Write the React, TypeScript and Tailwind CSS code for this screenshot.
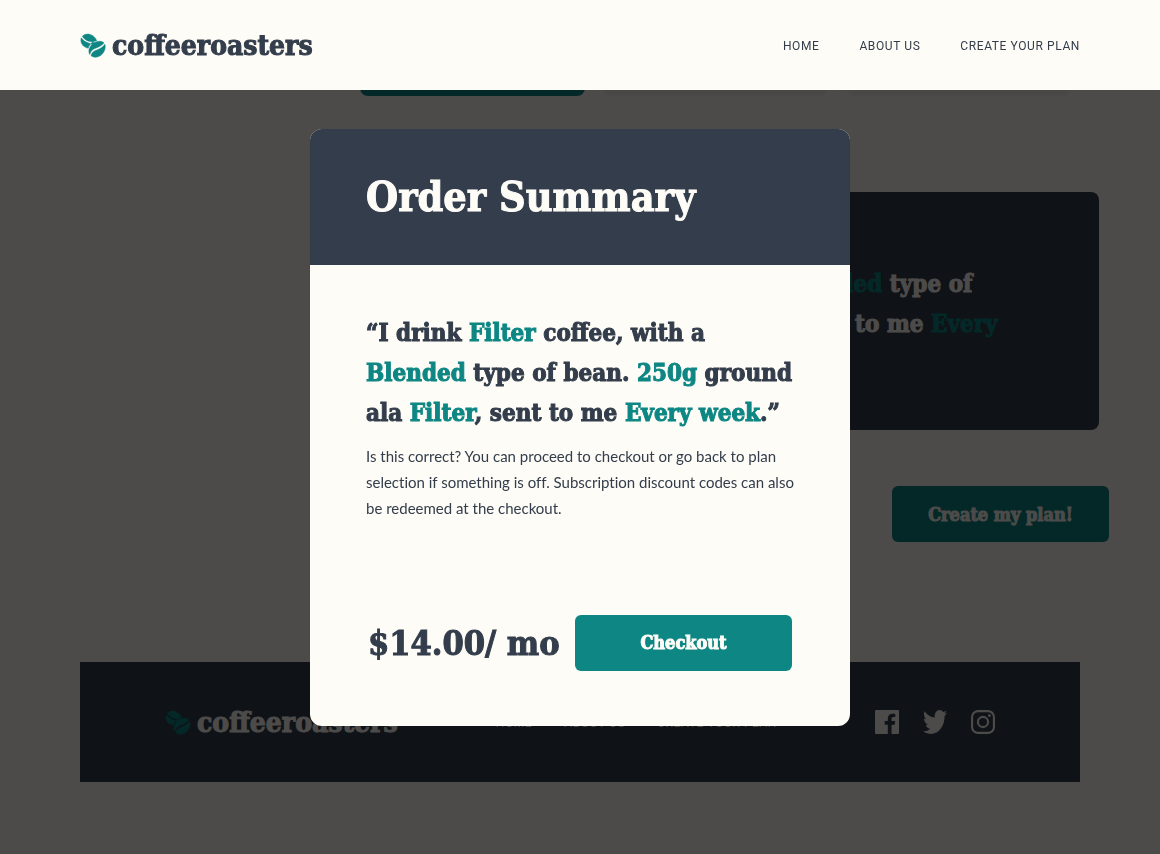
import type { ReactNode } from 'react';

const links = ['Home', 'About us', 'Create your plan'];

const display = "font-['DejaVu_Serif_Condensed','DejaVu_Serif',serif] font-bold";
const heavy = `${display} [-webkit-text-stroke:1px_currentColor]`;

function Beans() {
  return (
    <svg viewBox="0 0 26 26" className="h-[26px] w-[26px] shrink-0" aria-hidden="true">
      <g className="fill-[#0e8784] stroke-[#0e8784]" strokeWidth="0.5">
        <path d="M2.3 3.4C5 6.9 7.4 8 10.6 8.6C12.4 8.9 13.6 9.3 14.4 9.9L12.2 11.4C11 10.7 9.8 10.4 8.4 9.9C5.4 8.9 3.2 7.4 1.3 4.8C.2 8 1.4 11.5 4.3 13.6C5.5 14.5 6.9 15 8.2 15.2C8.8 13 10.2 11 12.2 9.6C13.6 8.6 15.1 8 16.6 7.8C15.9 4.8 13.3 2.3 10 1.4C7 .6 4 1.4 2.3 3.4Z" />
        <path d="M24 9.8C22.2 8.2 19.3 7.8 16.4 8.8C11.8 10.4 8.6 14.6 8.9 18.7C9 19.8 9.3 20.7 9.8 21.5C10.4 17.9 12.6 16.4 16 15C19.6 13.6 22.1 12.3 24 9.8Z" />
        <path d="M24.9 11.3C23.2 14.1 20.6 15.4 17.4 16.7C13.8 18.1 11.8 19.3 11 22.8C13 24.4 15.9 24.7 18.7 23.5C23.4 21.5 26.2 15.9 24.9 11.3Z" />
      </g>
    </svg>
  );
}

function Logo() {
  return (
    <a href="#home" className="flex items-center gap-1.5 pt-0.5">
      <Beans />
      <span className={`${heavy} text-[28px] leading-8`}>coffeeroasters</span>
    </a>
  );
}

function Nav({ label, className }: { label: string; className: string }) {
  return (
    <nav aria-label={label} className="pt-0.5">
      <ul className={`flex text-xs uppercase leading-4 tracking-wider ${className}`}>
        {links.map((link) => (
          <li key={link}>
            <a href={`#${link.toLowerCase().replaceAll(' ', '-')}`}>{link}</a>
          </li>
        ))}
      </ul>
    </nav>
  );
}

function Pick({ children }: { children: ReactNode }) {
  return <span className="text-[#0e8784]">{children}</span>;
}

function Choice() {
  return (
    <>
      “I drink <Pick>Filter</Pick> coffee, with a <Pick>Blended</Pick> type of bean. <Pick>250g</Pick> ground ala{' '}
      <Pick>Filter</Pick>, sent to me <Pick>Every week</Pick>.”
    </>
  );
}

function Socials() {
  return (
    <div className="flex items-center gap-6">
      <a href="#facebook" aria-label="Facebook">
        <svg viewBox="0 0 24 24" className="size-6 fill-current">
          <path d="M22.675 0H1.325C.593 0 0 .593 0 1.325v21.351C0 23.407.593 24 1.325 24H12.82v-9.294H9.692v-3.622h3.128V8.413c0-3.1 1.893-4.788 4.659-4.788 1.325 0 2.463.099 2.795.143v3.24l-1.918.001c-1.504 0-1.795.715-1.795 1.763v2.313h3.587l-.467 3.622h-3.12V24h6.116c.73 0 1.323-.593 1.323-1.325V1.325C24 .593 23.407 0 22.675 0z" />
        </svg>
      </a>
      <a href="#twitter" aria-label="Twitter">
        <svg viewBox="0 2.2 24 19.6" preserveAspectRatio="none" className="size-6 fill-current">
          <path d="M24 4.557a9.83 9.83 0 01-2.828.775 4.932 4.932 0 002.165-2.724 9.864 9.864 0 01-3.127 1.195 4.916 4.916 0 00-3.594-1.555c-3.179 0-5.515 2.966-4.797 6.045A13.978 13.978 0 011.671 3.149a4.93 4.93 0 001.523 6.574 4.903 4.903 0 01-2.229-.616c-.054 2.281 1.581 4.415 3.949 4.89a4.935 4.935 0 01-2.224.084 4.928 4.928 0 004.6 3.419A9.9 9.9 0 010 19.54a13.94 13.94 0 007.548 2.212c9.142 0 14.307-7.721 13.995-14.646A10.025 10.025 0 0024 4.557z" />
        </svg>
      </a>
      <a href="#instagram" aria-label="Instagram">
        <svg viewBox="0 0 24 24" className="size-6 fill-none stroke-current" strokeWidth="2.16">
          <rect x="1.08" y="1.08" width="21.84" height="21.84" rx="6" />
          <circle cx="12" cy="12" r="5.08" />
          <circle cx="18.41" cy="5.6" r="1.44" className="fill-current stroke-none" />
        </svg>
      </a>
    </div>
  );
}

export default function App() {
  return (
    <div className="min-h-screen bg-[#fefcf7] font-[Roboto,sans-serif] text-[#333d4b]">
      <header className="fixed inset-x-0 top-0 z-30 flex h-[90px] items-center justify-between bg-[#fefcf7] px-20">
        <Logo />
        <Nav label="Main" className="gap-10" />
      </header>

      <main className="pb-[120px] pl-[360px] pr-[51px]">
        <div className="mr-[38px] grid grid-cols-3 gap-[18px]">
          <div className="h-24 rounded-lg bg-[#0e8784]" />
          <div className="h-24 rounded-lg bg-[#f4f1eb]" />
          <div className="h-24 rounded-lg bg-[#f4f1eb]" />
        </div>
        <section className="mr-[10px] mt-24 flex min-h-[238px] flex-col justify-center rounded-lg bg-[#333d4b] pl-[76px] pr-16 text-[#fefcf7]">
          <h2 className="text-base uppercase leading-[26px]">Order Summary</h2>
          <p className={`${heavy} text-2xl leading-10`}>
            <Choice />
          </p>
        </section>
        <div className="mt-14 flex justify-end">
          <button type="button" className={`${heavy} h-14 w-[217px] rounded-md bg-[#0e8784] pt-0.5 text-lg text-[#fefcf7]`}>
            Create my plan!
          </button>
        </div>
      </main>

      <footer className="mx-20 mb-[72px] flex h-[120px] items-center justify-between bg-[#333d4b] px-[85px] text-[#fefcf7]">
        <Logo />
        <Nav label="Footer" className="gap-8" />
        <Socials />
      </footer>

      <div className="fixed inset-0 z-20 flex items-center justify-center bg-black/70">
        <div
          role="dialog"
          aria-modal="true"
          aria-labelledby="summary-title"
          className="w-full max-w-[540px] overflow-hidden rounded-xl bg-[#fefcf7]"
        >
          <div className="bg-[#333d4b] px-14 py-11">
            <h1 id="summary-title" className={`${heavy} text-[41px] leading-12 text-[#fefcf7]`}>
              Order Summary
            </h1>
          </div>
          <div className="px-14 pb-[55px] pt-12">
            <p className={`${heavy} whitespace-nowrap text-2xl leading-10`}>
              “I drink <Pick>Filter</Pick> coffee, with a<br />
              <Pick>Blended</Pick> type of bean. <Pick>250g</Pick> ground
              <br />
              ala <Pick>Filter</Pick>, sent to me <Pick>Every week</Pick>.”
            </p>
            <p className="mt-2.5 whitespace-nowrap font-[Lato,sans-serif] text-[15px] leading-[26px] [font-variant-ligatures:none]">
              Is this correct? You can proceed to checkout or go back to plan
              <br />
              selection if something is off. Subscription discount codes can also
              <br />
              be redeemed at the checkout.
            </p>
            <div className="mt-[94px] flex items-center justify-between px-0.5">
              <p className={`${heavy} whitespace-nowrap text-[34px] leading-9`}>$14.00/ mo</p>
              <button type="button" className={`${heavy} h-14 w-[217px] rounded-md bg-[#0e8784] text-lg text-[#fefcf7]`}>
                Checkout
              </button>
            </div>
          </div>
        </div>
      </div>
    </div>
  );
}
